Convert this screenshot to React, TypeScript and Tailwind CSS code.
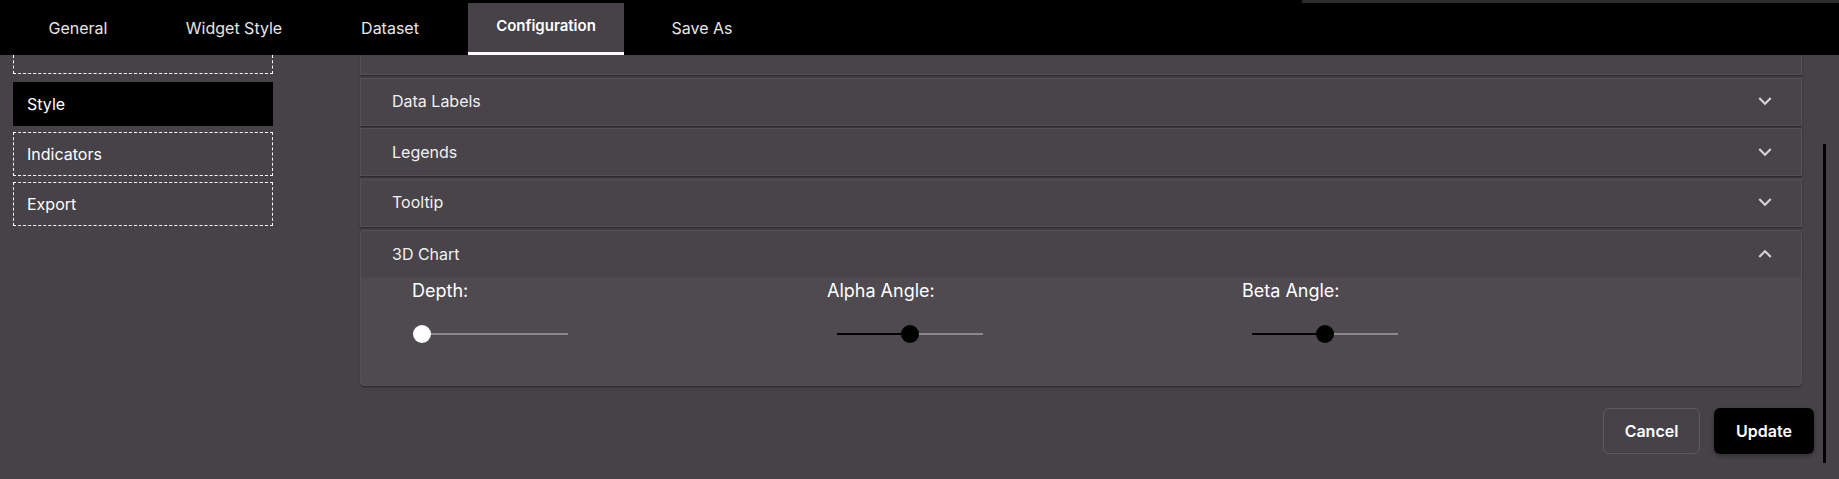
const tabs = ['General', 'Widget Style', 'Dataset', 'Configuration', 'Save As']
const activeTab = 'Configuration'

const sections = ['Data Labels', 'Legends', 'Tooltip']

const sliders = [
  { label: 'Depth:', value: 0, light: true },
  { label: 'Alpha Angle:', value: 50, light: false },
  { label: 'Beta Angle:', value: 50, light: false },
]

function Chevron({ up }: { up?: boolean }) {
  return (
    <svg viewBox="0 0 24 24" className={up ? 'h-[26px] w-[26px] rotate-180 fill-[#d4d4d4]' : 'h-[26px] w-[26px] fill-[#d4d4d4]'}>
      <path d="M16.59 8.59 12 13.17 7.41 8.59 6 10l6 6 6-6z" />
    </svg>
  )
}

function Slider({ value, light }: { value: number; light: boolean }) {
  return (
    <div className="relative ml-[10px] mt-[21px] flex h-[18px] w-[146px] items-center">
      <div className="h-[2px] w-full bg-[#8a8a8a]" />
      <div className="absolute left-0 h-[2px] bg-black" style={{ width: `${value}%` }} />
      <div
        className={
          light
            ? 'absolute h-[18px] w-[18px] -translate-x-1/2 rounded-full bg-white'
            : 'absolute h-[18px] w-[18px] -translate-x-1/2 rounded-full bg-black'
        }
        style={{ left: `${value}%` }}
      />
    </div>
  )
}

export default function App() {
  return (
    <div className="flex h-[479px] w-full flex-col overflow-hidden bg-[#464247] font-['Inter',sans-serif] text-white">
      {/* Top tabs */}
      <nav className="relative flex h-[55px] shrink-0 bg-black">
        {tabs.map((t) =>
          t === activeTab ? (
            <div
              key={t}
              className="mt-[3px] flex w-[156px] items-center justify-center border-b-[3px] border-white bg-[#464247] pb-[2px] text-[15px] font-semibold text-white"
            >
              {t}
            </div>
          ) : (
            <div key={t} className="flex w-[156px] items-center justify-center pt-px text-[16px] text-[#e6e6e6]">
              {t}
            </div>
          )
        )}
        <div className="absolute right-0 top-0 h-[3px] w-[537px] bg-[#2d2d2d]" />
      </nav>

      <div className="relative flex flex-1">
        {/* Sidebar */}
        <aside className="flex w-[360px] shrink-0 flex-col gap-[6px] pl-[13px]">
          <div className="mb-[2px] h-[19px] w-[260px] border border-t-0 border-dashed border-white" />
          <div className="flex h-[44px] w-[260px] items-center border border-black bg-black pb-px pl-[13px] text-[16px]">
            Style
          </div>
          <div className="flex h-[44px] w-[260px] items-center border border-dashed border-white pl-[13px] text-[16px]">
            Indicators
          </div>
          <div className="flex h-[44px] w-[260px] items-center border border-dashed border-white pl-[13px] text-[16px]">
            Export
          </div>
        </aside>

        {/* Main */}
        <main className="flex flex-1 flex-col pr-[25px]">
          <div className="mr-[12px] flex flex-col gap-[2.67px]">
            <div className="h-[20px] border border-t-0 border-[#545055] bg-[#484449] shadow-[0_2px_1px_-1px_rgba(0,0,0,0.2),0_1px_1px_0_rgba(0,0,0,0.14),0_1px_3px_0_rgba(0,0,0,0.12)]" />
            {sections.map((s) => (
              <div
                key={s}
                className="flex h-[48px] items-center justify-between border border-[#545055] bg-[#484449] pb-px pl-[31px] pr-[23px] text-[16px] text-[#f0f0f0] shadow-[0_2px_1px_-1px_rgba(0,0,0,0.2),0_1px_1px_0_rgba(0,0,0,0.14),0_1px_3px_0_rgba(0,0,0,0.12)]"
              >
                {s}
                <Chevron />
              </div>
            ))}
            <div className="rounded-[4px] border border-[#545055] bg-[#4e4a4f] shadow-[0_2px_1px_-1px_rgba(0,0,0,0.2),0_1px_1px_0_rgba(0,0,0,0.14),0_1px_3px_0_rgba(0,0,0,0.12)]">
              <div className="flex h-[46px] items-center justify-between rounded-t-[4px] bg-[#484449] pl-[31px] pr-[23px] text-[16px] text-[#f0f0f0]">
                3D Chart
                <Chevron up />
              </div>
              <div className="flex pb-[42px] pl-[51px]">
                {sliders.map((sl) => (
                  <div key={sl.label} className="flex w-[415px] flex-col">
                    <span className="text-[18px] leading-[27px] text-white">{sl.label}</span>
                    <Slider value={sl.value} light={sl.light} />
                  </div>
                ))}
              </div>
            </div>
          </div>

          <div className="mt-[22px] flex justify-end gap-[14px]">
            <button className="h-[46px] w-[97px] rounded-[6px] border border-[#5d595e] text-[16px] font-semibold text-white">
              Cancel
            </button>
            <button className="h-[46px] w-[100px] rounded-[6px] bg-black text-[16px] font-semibold text-white shadow-[0_2px_4px_rgba(0,0,0,0.3)]">
              Update
            </button>
          </div>
        </main>

        {/* scrollbar thumb */}
        <div className="absolute left-[1823px] top-[89px] h-[319px] w-[3px] bg-black" />
      </div>
    </div>
  )
}
